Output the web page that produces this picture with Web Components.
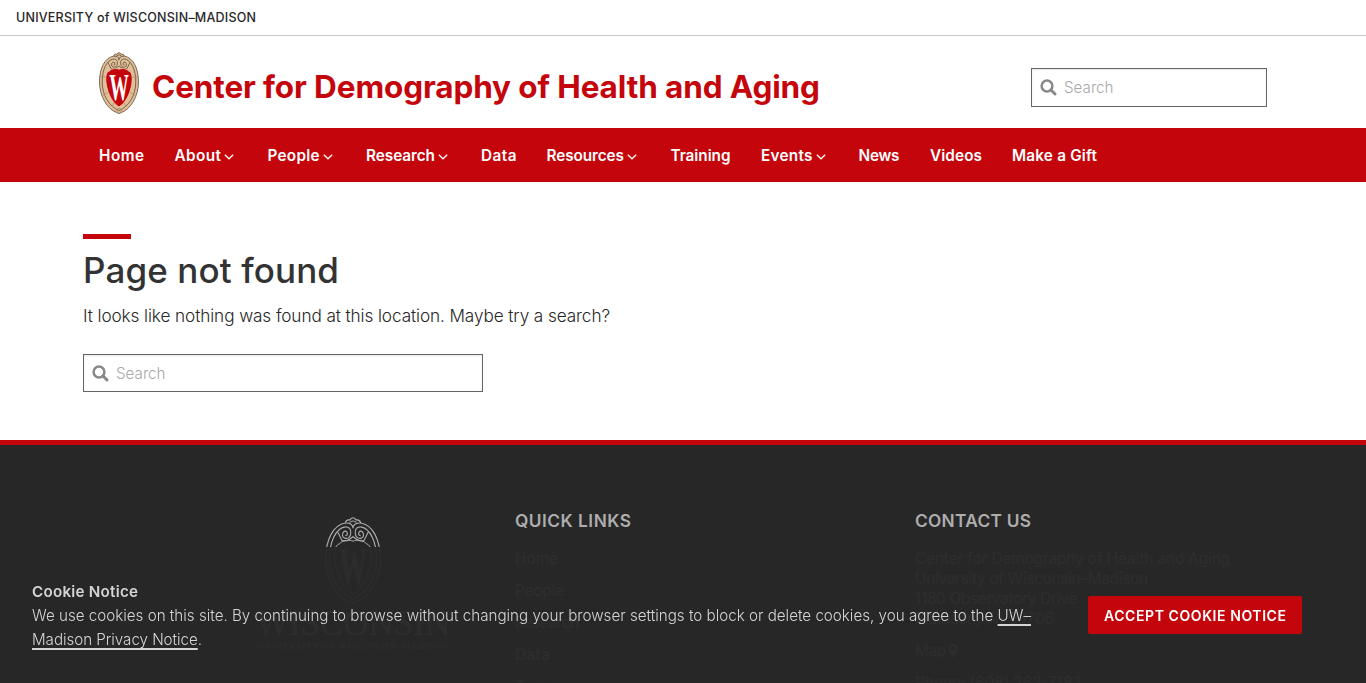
<!DOCTYPE html>
<html lang="en">
<head>
<meta charset="utf-8">
<title>Page not found – Center for Demography of Health and Aging</title>
<style>
html,body{margin:0;height:100%;overflow:hidden;background:#fff;font-family:Inter,"Liberation Sans",sans-serif;color:#282728}
</style>
</head>
<body>
<cdha-page></cdha-page>
<script>
const shadow=(el,html)=>{const t=document.createElement('template');t.innerHTML=html;const r=el.attachShadow({mode:'open'});r.append(t.content.cloneNode(true));return r;};

/* Tracks its text out, or in, to a given line width. */
class FitText extends HTMLElement{
  connectedCallback(){
    if(this.shadowRoot)return;
    const r=shadow(this,`<style>:host{display:block;white-space:nowrap;width:max-content}span{display:inline-block}</style><span><slot></slot></span>`);
    const w=parseFloat(this.getAttribute('w'));
    const s=r.querySelector('span');
    const nat=s.getBoundingClientRect().width;
    const n=this.textContent.length;
    if(n>1&&nat){const k=(w-nat)/(n-1);s.style.letterSpacing=k+'px';s.style.marginRight=(-k)+'px';}
  }
}

class UwCrest extends HTMLElement{
  connectedCallback(){
    shadow(this,`<style>:host{display:block;line-height:0}svg{display:block;width:100%;height:100%}
    .b{fill:var(--band,none);stroke:var(--line,#bbb);stroke-width:var(--sw,.9)}
    .l{fill:none;stroke:var(--line,#bbb);stroke-width:var(--sw,.9)}
    .h{fill:var(--heart,none);stroke:var(--heart-line,none);stroke-width:.7}
    text{font:bold 34px "Liberation Serif",serif;fill:var(--w,#fff)}</style>
    <svg viewBox="0 0 40 62">
      <path class="b" d="M14.5 4.2Q15 1.6 17.8 2Q20-1 22.2 2Q25 1.6 25.5 4.2C34 5.5 39.5 16 39.5 30C39.5 45 31 57.5 22.5 60.5Q20 62.5 17.5 60.5C9 57.5.5 45 .5 30C.5 16 6 5.5 14.5 4.2Z"/>
      <path class="l" d="M14.5 7C7.5 8 3.2 18 3.2 30C3.2 43 10 54.5 20 58.6C30 54.5 36.8 43 36.8 30C36.8 18 32.5 8 25.5 7"/>
      <path class="l" d="M14.5 4.2Q20 4 20 8Q20 4 25.5 4.2M17.5 3.8Q20 1.8 22.5 3.8M14.5 7Q18.7 7 18.4 11.5Q18 15.5 14.5 15.2Q11.8 14.5 12.7 11.5Q14 9 15.6 10.6Q16.8 13 14.5 13.2M25.5 7Q21.3 7 21.6 11.5Q22 15.5 25.5 15.2Q28.2 14.5 27.3 11.5Q26 9 24.4 10.6Q23.2 13 25.5 13.2M9 10.5L12 16.5Q15 18 18 15.5L20 14L22 15.5Q25 18 28 16.5L31 10.5"/>
      <path class="l" style="stroke:var(--spokes,none)" d="M.8 25H7M39.2 25H33M4 43.5L9.5 40M36 43.5L30.5 40M13 55L15.5 50M27 55L24.5 50M18 61V57Q20 55.5 22 57V61"/>
      <path class="h" d="M20 17.2C22 16.3 27 16 29.6 19C33.3 20 33.7 26 32.8 32C31 42.5 26.5 51 20 55C13.5 51 9 42.5 7.2 32C6.3 26 6.7 20 10.4 19C13 16 18 16.3 20 17.2Z"/>
      <g transform="translate(10.2 47.6) scale(.575 1.12)"><text>W</text></g>
    </svg>`);
  }
}

class SearchBox extends HTMLElement{
  connectedCallback(){
    shadow(this,`<style>:host{display:flex;box-sizing:border-box;align-items:center;border:1px solid #646569;background:#fff;box-shadow:inset 0 1px 2px rgba(10,10,10,.1);padding-left:8px}
    svg{width:17px;height:17px;flex:none;margin-right:7px}
    input{border:0;outline:0;padding:0;background:none;flex:1;min-width:0;font:300 15.2px Inter,sans-serif;letter-spacing:0;height:30px}
    input::placeholder{color:#a8a8aa;opacity:1}</style>
    <svg viewBox="0 0 17 17" fill="none" stroke="#88888a"><circle cx="7" cy="7" r="5.4" stroke-width="2.5"/><path d="M11 11L15 15" stroke-width="3" stroke-linecap="round"/></svg>
    <input type="search" placeholder="Search" aria-label="Search">`);
  }
}

class NavItem extends HTMLElement{
  connectedCallback(){
    const w=this.getAttribute('w'),menu=this.hasAttribute('menu');
    shadow(this,`<style>:host{display:flex;align-items:center;color:#fff;font-weight:600;font-size:15.3px;line-height:24px;padding-top:2px}
    svg{width:10px;height:6px;margin:1px 0 0 3px}</style>
    <fit-text w="${w}">${this.getAttribute('label')}</fit-text>${menu?'<svg viewBox="0 0 10 6" fill="none" stroke="#fff" stroke-width="1.25"><path d="M.8.8L5 4.8L9.2.8"/></svg>':''}`);
  }
}

class SiteHeader extends HTMLElement{
  connectedCallback(){
    shadow(this,`<style>:host{display:block}
    .top{height:35px;border-bottom:1px solid #c8c8c9;padding-left:16px;display:flex;align-items:center;font-size:12.5px;font-weight:500;color:#282728}
    .brand{height:92px;box-sizing:border-box;padding:16px 99px 0 99px;display:flex;align-items:flex-start}
    uw-crest{width:40px;height:62px;margin-right:13px;--band:#e0bf96;--line:#5f4c3c;--sw:.8;--spokes:#a88b6b;--heart:#c5050c;--heart-line:#f2dfc4}
    h1{margin:14px 0 0;font-size:31.5px;line-height:42px;font-weight:700;color:#c5050c;flex:1}
    search-box{width:236px;height:39px;margin-top:16px}
    nav{background:#c5050c;height:54px;display:grid;grid-template-columns:75.5px 93px 98.5px 115px 65.5px 124px 90.5px 97.5px 71.5px 82px 90px;padding-left:99px;align-items:center}</style>
    <div class="top"><fit-text w="240">UNIVERSITY of WISCONSIN–MADISON</fit-text></div>
    <div class="brand"><uw-crest></uw-crest><h1><fit-text w="668">Center for Demography of Health and Aging</fit-text></h1><search-box></search-box></div>
    <nav><nav-item label="Home" w="45"></nav-item><nav-item label="About" w="46.5" menu></nav-item><nav-item label="People" w="52" menu></nav-item><nav-item label="Research" w="69" menu></nav-item><nav-item label="Data" w="35.5"></nav-item><nav-item label="Resources" w="77.5" menu></nav-item><nav-item label="Training" w="60"></nav-item><nav-item label="Events" w="51.5" menu></nav-item><nav-item label="News" w="41"></nav-item><nav-item label="Videos" w="52"></nav-item><nav-item label="Make a Gift" w="85"></nav-item></nav>`);
  }
}

class NotFound extends HTMLElement{
  connectedCallback(){
    shadow(this,`<style>:host{display:block;height:258px;box-sizing:border-box;padding:52px 83px 0}
    .bar{width:48px;height:5px;background:#c5050c}
    h2{margin:8px 0 0;font-size:35px;line-height:46px;font-weight:500;color:#333334}
    p{margin:10px 0 0;font-size:17.2px;line-height:26px;font-weight:300;color:#282728}
    search-box{width:400px;height:38px;margin-top:25px}</style>
    <div class="bar"></div><h2><fit-text w="256">Page not found</fit-text></h2>
    <p><fit-text w="527">It looks like nothing was found at this location. Maybe try a search?</fit-text></p>
    <search-box></search-box>`);
  }
}

class SiteFooter extends HTMLElement{
  connectedCallback(){
    shadow(this,`<style>:host{display:grid;grid-template-columns:432px 400px 1fr;height:243px;overflow:hidden;box-sizing:border-box;border-top:5px solid #c5050c;background:#282728;padding:65px 83px 0;color:#bdbdbe;font-size:15.3px;line-height:20px}
    .logo{width:196px;margin:7px 0 0 172px;display:flex;flex-direction:column;align-items:center;color:#bbb;font-family:"Liberation Serif",serif}
    uw-crest{width:56px;height:87px;--line:#adadad;--sw:.8;--heart-line:#adadad;--w:#adadad}
    .name{font-size:35px;line-height:34px;margin-top:3px}.sub{font-size:9px;line-height:12px;margin-top:-1px}
    h3{margin:0 0 17px;font-size:17.3px;line-height:22px;font-weight:600;color:#adadae}
    .links fit-text{margin-bottom:12px}.links h3 fit-text{margin:0}.map{display:flex;align-items:center;margin:12px 0}.map svg{width:10px;height:14px;margin-left:2px}</style>
    <div class="logo"><uw-crest></uw-crest><fit-text class="name" w="194">WISCONSIN</fit-text><fit-text class="sub" w="192">UNIVERSITY OF WISCONSIN–MADISON</fit-text></div>
    <div class="links"><h3><fit-text w="116">QUICK LINKS</fit-text></h3><fit-text w="43">Home</fit-text><fit-text w="49">People</fit-text><fit-text w="64">Research</fit-text><fit-text w="35">Data</fit-text><fit-text w="60">Training</fit-text></div>
    <div><h3><fit-text w="116">CONTACT US</fit-text></h3><fit-text w="315">Center for Demography of Health and Aging</fit-text><fit-text w="233">University of Wisconsin–Madison</fit-text><fit-text w="162">1180 Observatory Drive</fit-text><fit-text w="139">Madison, WI 53706</fit-text>
    <div class="map"><fit-text w="31">Map</fit-text><svg viewBox="0 0 10 14"><path fill="#bdbdbe" fill-rule="evenodd" d="M5 0A4.7 4.7 0 0 1 9.7 4.7C9.7 7 7 10.5 5 14C3 10.5.3 7 .3 4.7A4.7 4.7 0 0 1 5 0ZM5 2.6A2.1 2.1 0 1 0 5 6.8A2.1 2.1 0 0 0 5 2.6Z"/></svg></div>
    <fit-text w="167">Phone: (608) 262-7182</fit-text></div>`);
  }
}

class CookieNotice extends HTMLElement{
  connectedCallback(){
    shadow(this,`<style>:host{position:fixed;left:0;right:0;bottom:0;height:136px;box-sizing:border-box;background:rgba(40,39,40,.965);padding:33px 64px 0 32px;display:flex;color:#d4d4d5;font-size:15.2px;line-height:24px;font-weight:300}
    .text{flex:1}.title{font-weight:600}
    a{color:inherit;text-decoration:underline;text-decoration-thickness:2px;text-underline-offset:3px}
    button{border:0;border-radius:2px;background:#c5050c;color:#fff;width:214px;height:38px;margin-top:16px;padding:0;display:grid;place-items:center;font:600 14px Inter,sans-serif}</style>
    <div class="text"><fit-text class="title" w="106">Cookie Notice</fit-text><fit-text w="999">We use cookies on this site. By continuing to browse without changing your browser settings to block or delete cookies, you agree to the <a>UW–</a></fit-text><fit-text w="170"><a>Madison Privacy Notice</a>.</fit-text></div>
    <button><fit-text w="182">ACCEPT COOKIE NOTICE</fit-text></button>`);
  }
}

class CdhaPage extends HTMLElement{
  connectedCallback(){shadow(this,`<style>:host{display:block}</style><site-header></site-header><not-found></not-found><site-footer></site-footer><cookie-notice></cookie-notice>`);}
}
for(const [n,c] of [['fit-text',FitText],['uw-crest',UwCrest],['search-box',SearchBox],['nav-item',NavItem],['site-header',SiteHeader],['not-found',NotFound],['site-footer',SiteFooter],['cookie-notice',CookieNotice],['cdha-page',CdhaPage]])customElements.define(n,c);
</script>
</body>
</html>
